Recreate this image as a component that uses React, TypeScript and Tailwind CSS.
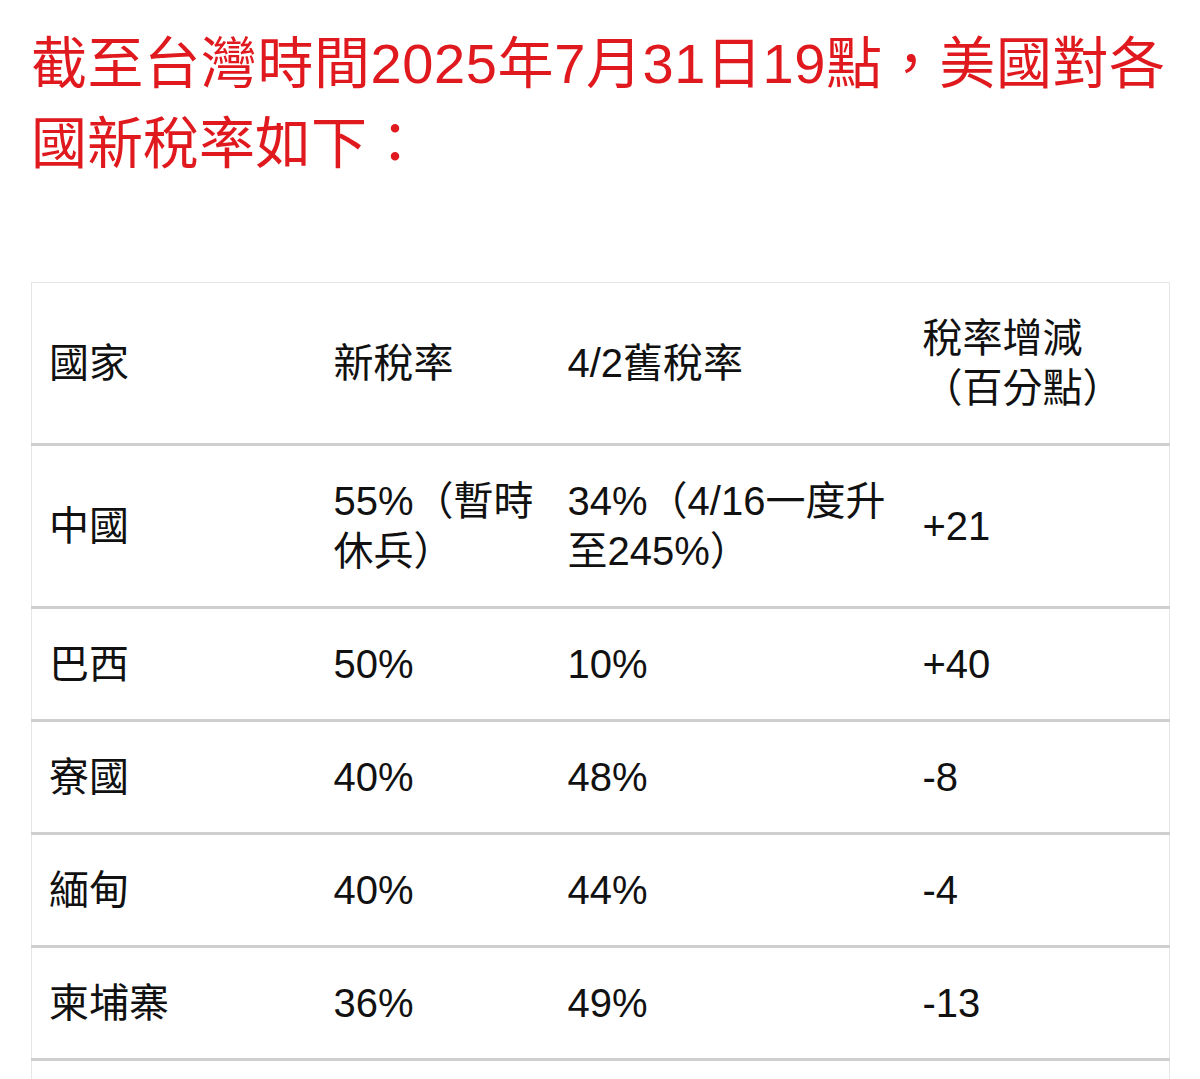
import React from "react";

const rows: [string, string, string, string][] = [
  ["中國", "55%（暫時休兵）", "34%（4/16一度升至245%）", "+21"],
  ["巴西", "50%", "10%", "+40"],
  ["寮國", "40%", "48%", "-8"],
  ["緬甸", "40%", "44%", "-4"],
  ["柬埔寨", "36%", "49%", "-13"],
  ["泰國", "36%", "36%", "0"],
];

export default function App() {
  return (
    <div className="min-h-screen bg-white pl-[31px] pr-[31px] pt-[24px] [font-family:'Liberation_Sans','Noto_Sans_CJK_TC',sans-serif]">
      <p className="text-[56px] leading-[80px] text-[#e0191e] whitespace-nowrap">
        <span className="tracking-[0.6px]">截至台灣時間2025年7月31日19點，美國對各</span>
        <br />
        國新稅率如下：
      </p>
      <table className="mt-[98px] w-[1138px] table-fixed border-collapse border border-[#e6e6e6] text-[40px] leading-[50px] text-[#111]">
        <colgroup>
          <col className="w-[285px]" />
          <col className="w-[234px]" />
          <col className="w-[355px]" />
          <col className="w-[264px]" />
        </colgroup>
        <thead>
          <tr className="border-b-[3px] border-[#cfcfcf]">
            <th className="pl-[17px] pr-[10px] py-[30px] text-left align-middle font-normal">國家</th>
            <th className="pl-[17px] pr-[10px] py-[30px] text-left align-middle font-normal">新稅率</th>
            <th className="pl-[17px] pr-[10px] py-[30px] text-left align-middle font-normal">4/2舊稅率</th>
            <th className="pl-[17px] pr-[30px] py-[30px] text-left align-middle font-normal">稅率增減（百分點）</th>
          </tr>
        </thead>
        <tbody>
          {rows.map((r) => (
            <tr key={r[0]} className="border-b-[3px] border-[#cfcfcf]">
              {r.map((c, i) => (
                <td key={i} className="pl-[17px] pr-[10px] py-[30px] align-middle">
                  {c}
                </td>
              ))}
            </tr>
          ))}
        </tbody>
      </table>
    </div>
  );
}
